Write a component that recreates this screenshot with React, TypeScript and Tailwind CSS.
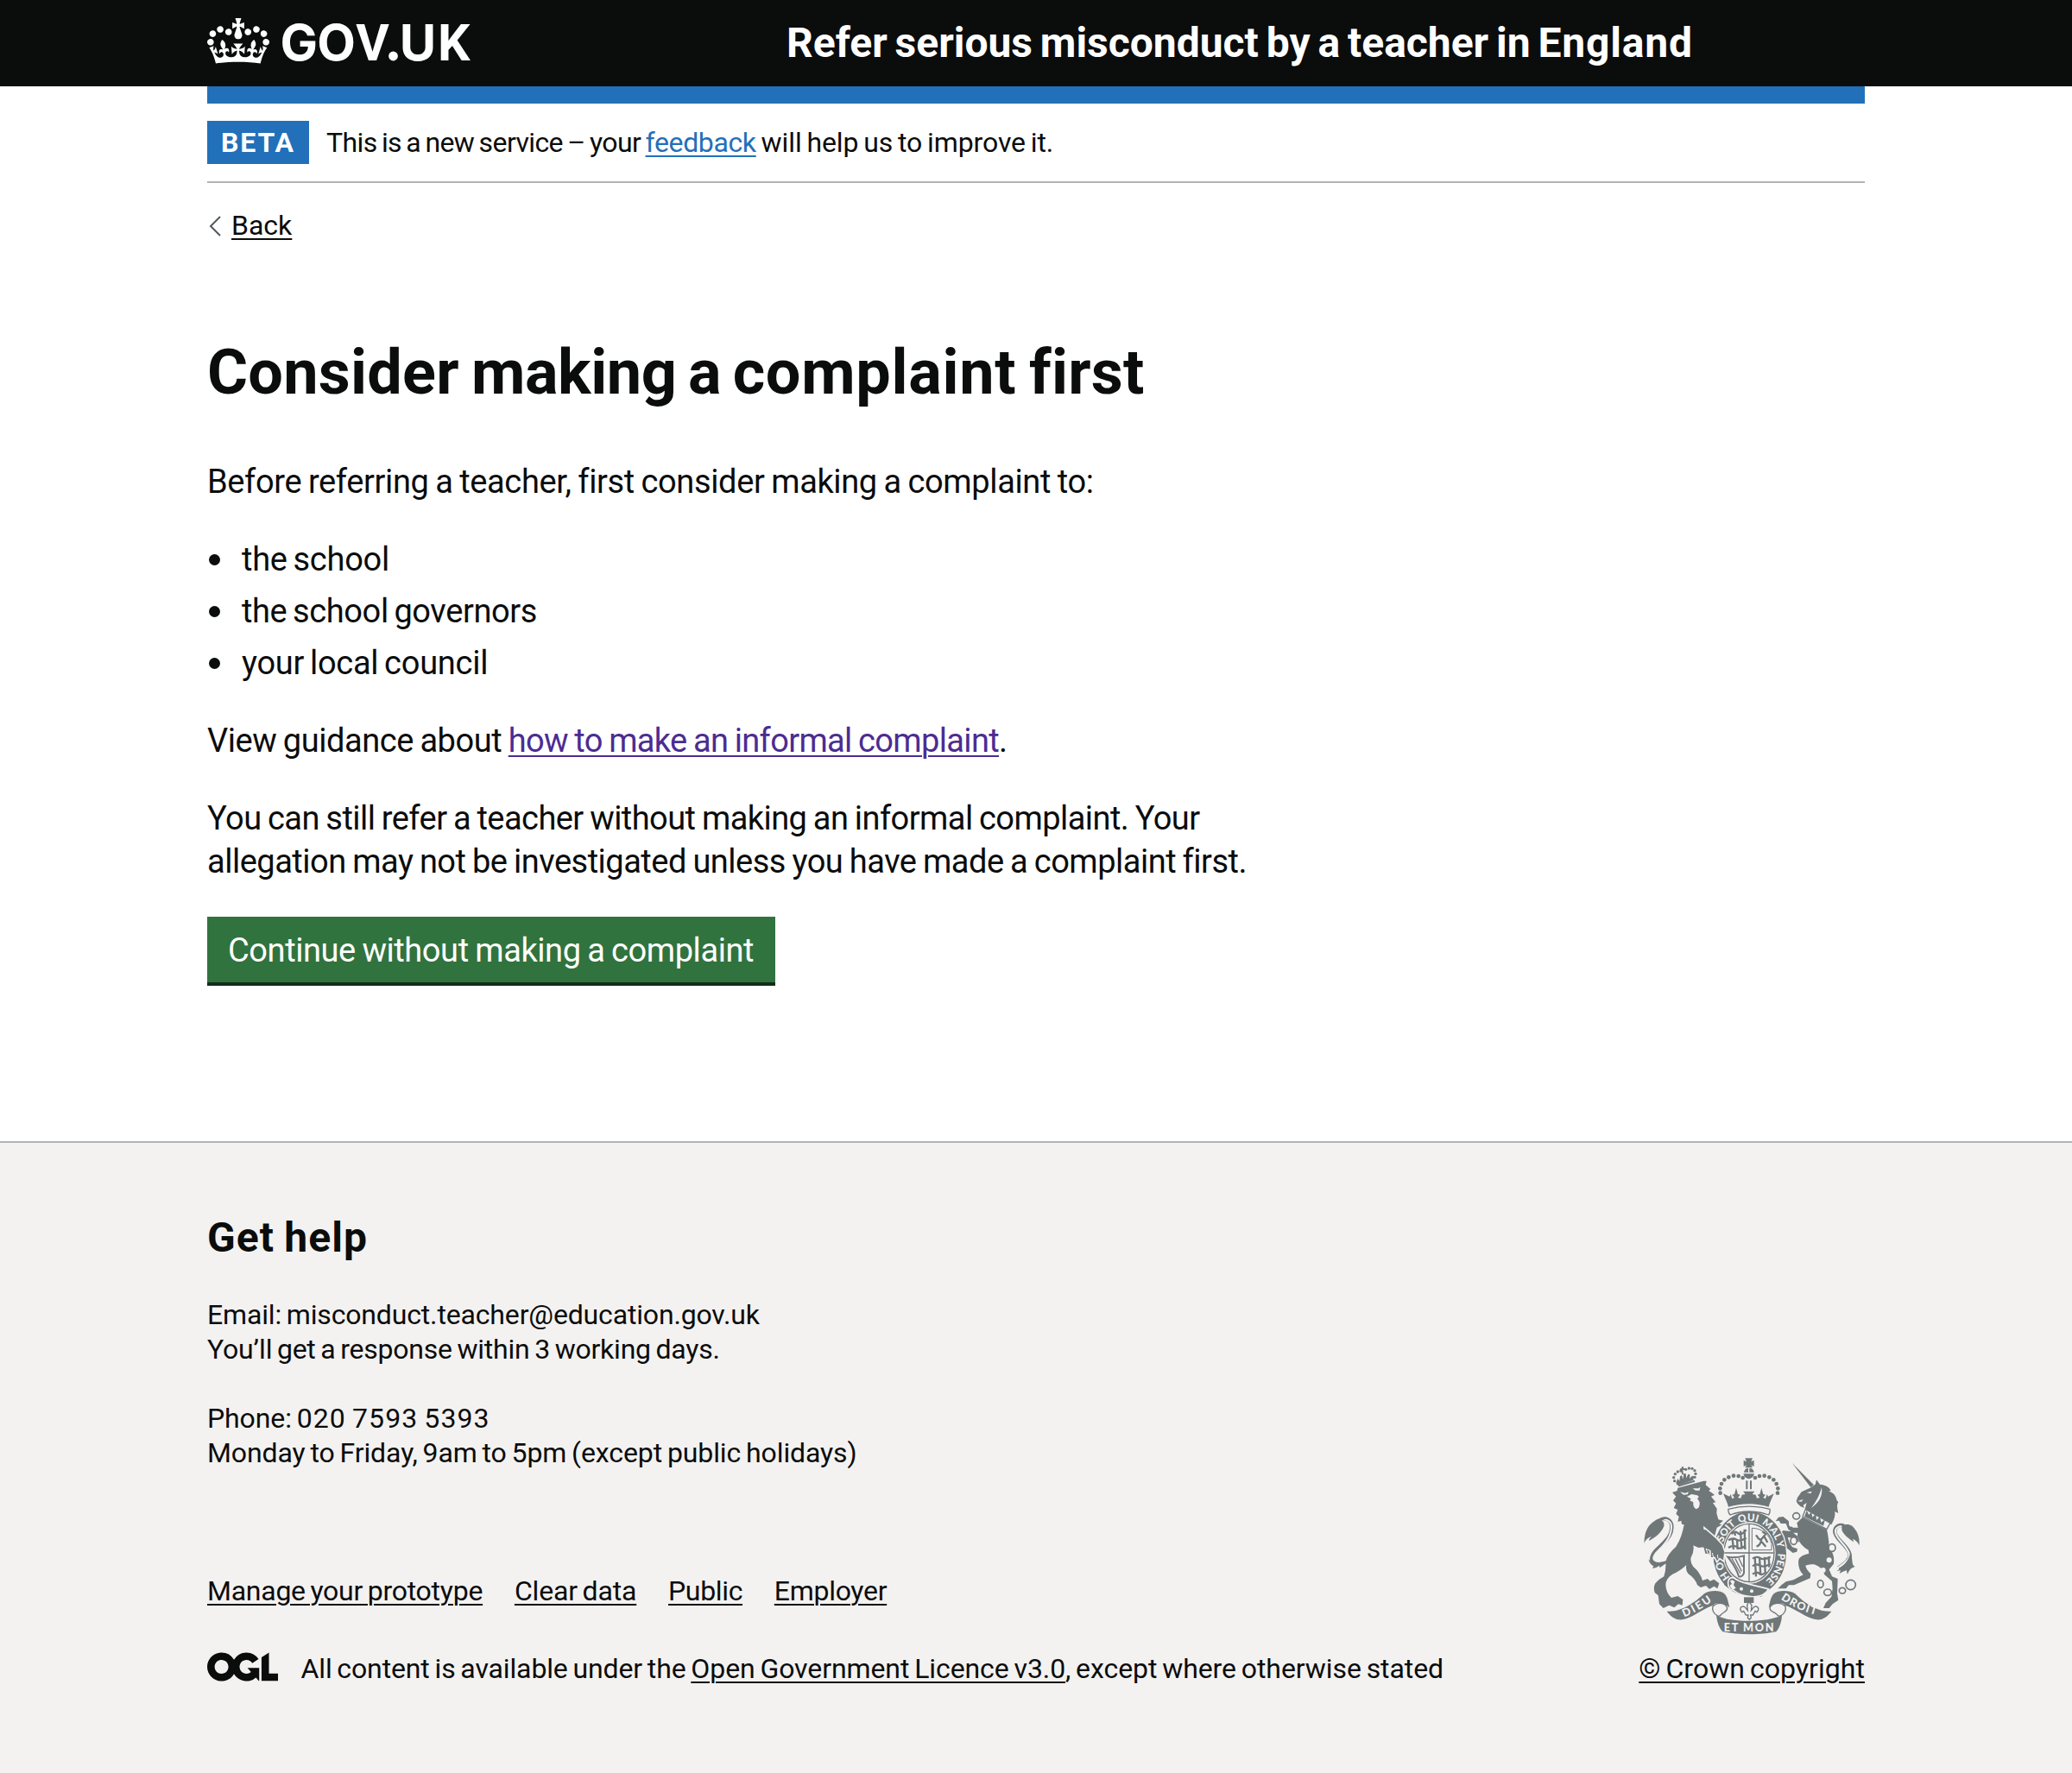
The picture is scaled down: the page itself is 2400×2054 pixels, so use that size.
import type { ReactNode } from "react";

const CROWN =
  "M25 30.2c3.5 1.5 7.7-.2 9.1-3.7 1.5-3.6-.2-7.8-3.9-9.2-3.6-1.4-7.6.3-9.1 3.9-1.4 3.5.3 7.5 3.9 9zM9 39.5c3.6 1.5 7.8-.2 9.2-3.7 1.5-3.6-.2-7.8-3.9-9.1-3.6-1.5-7.6.2-9.1 3.8-1.4 3.5.3 7.5 3.8 9zM4.4 57.2c3.5 1.5 7.7-.2 9.1-3.8 1.5-3.6-.2-7.7-3.9-9.1-3.5-1.5-7.6.3-9.1 3.8-1.4 3.5.3 7.6 3.9 9.1zm38.3-21.4c3.5 1.5 7.7-.2 9.1-3.8 1.5-3.6-.2-7.7-3.9-9.1-3.6-1.5-7.6.3-9.1 3.8-1.3 3.6.4 7.7 3.9 9.1zm64.4-5.6c-3.6 1.5-7.8-.2-9.1-3.7-1.5-3.6.2-7.8 3.8-9.2 3.6-1.4 7.7.3 9.2 3.9 1.3 3.5-.4 7.5-3.9 9zm15.9 9.3c-3.6 1.5-7.7-.2-9.1-3.7-1.5-3.6.2-7.8 3.7-9.1 3.6-1.5 7.7.2 9.2 3.8 1.5 3.5-.3 7.5-3.8 9zm4.7 17.7c-3.6 1.5-7.8-.2-9.2-3.8-1.5-3.6.2-7.7 3.9-9.1 3.6-1.5 7.7.3 9.2 3.8 1.3 3.5-.4 7.6-3.9 9.1zM89.3 35.8c-3.6 1.5-7.8-.2-9.2-3.8-1.4-3.6.2-7.7 3.9-9.1 3.6-1.5 7.7.3 9.2 3.8 1.4 3.6-.3 7.7-3.9 9.1zM69.7 17.7l8.9 4.7V9.3l-8.9 2.8c-.2-.3-.5-.6-.9-.9L72.4 0H59.6l3.5 11.2c-.3.3-.6.5-.9.9l-8.8-2.8v13.1l8.8-4.7c.3.3.6.7.9.9l-5 15.4v.1c-.2.8-.4 1.6-.4 2.4 0 4.1 3.1 7.5 7 8.1h.2c.3 0 .7.1 1 .1.4 0 .7 0 1-.1h.2c4-.6 7.1-4.1 7.1-8.1 0-.8-.1-1.7-.4-2.4V34l-5.1-15.4c.4-.2.7-.6 1-.9zM66 92.8c16.9 0 32.8 1.1 47.1 3.2 4-16.9 8.9-26.7 14-33.5l-9.6-3.4c1 4.9 1.1 7.2 0 10.2-1.5-1.4-3-4.3-4.2-8.7L108.6 76c2.8-2 5-3.2 7.5-3.3-4.4 9.4-10 11.9-13.6 11.2-4.3-.8-6.3-4.6-5.6-7.9 1-4.7 5.7-5.9 8-.5 4.3-8.7-3-11.4-7.6-8.8 7.1-7.2 7.9-13.5 2.1-21.1-8 6.1-8.1 12.3-4.5 20.8-4.7-5.4-12.1-2.5-9.5 6.2 3.4-5.2 7.9-2 7.2 3.1-.6 4.3-6.4 7.8-13.5 7.2-10.3-.9-10.9-8-11.2-13.8 2.5-.5 7.1 1.8 11 7.3L80.2 60c-4.1 4.4-8 5.3-12.3 5.4 1.4-4.4 8-11.6 8-11.6H55.5s6.4 7.2 7.9 11.6c-4.2-.1-8-1-12.3-5.4l1.4 16.4c3.9-5.5 8.5-7.7 10.9-7.3-.3 5.8-.9 12.8-11.1 13.8-7.2.6-12.9-2.9-13.5-7.2-.7-5 3.8-8.3 7.1-3.1 2.7-8.7-4.6-11.6-9.4-6.2 3.7-8.5 3.6-14.7-4.6-20.8-5.8 7.6-5 13.9 2.2 21.1-4.7-2.6-11.9.1-7.7 8.8 2.3-5.5 7.1-4.2 8.1.5.7 3.3-1.3 7.1-5.7 7.9-3.5.7-9-1.8-13.5-11.2 2.5.1 4.7 1.3 7.5 3.3l-4.7-15.4c-1.2 4.4-2.7 7.2-4.3 8.7-1.1-3-.9-5.3 0-10.2l-9.5 3.4c5 6.9 9.9 16.7 14 33.5 14.8-2.1 30.8-3.2 47.7-3.2z";

const OGL =
  "M421.5 142.8V.1l-50.7 32.3v161.1h112.4v-50.7zm-122.3-9.6A47.12 47.12 0 0 1 221 97.8c0-26 21.1-47.1 47.1-47.1 16.7 0 31.4 8.7 39.7 21.8l42.7-27.2A97.63 97.63 0 0 0 268.1 0c-36.5 0-68.3 20.1-85.1 49.7A98 98 0 0 0 97.8 0C43.9 0 0 43.9 0 97.8s43.9 97.8 97.8 97.8c36.5 0 68.3-20.1 85.1-49.7a97.76 97.76 0 0 0 149.6 25.4l19.4 22.2h3v-87.8h-80l24.3 27.5zM97.8 145c-26 0-47.1-21.1-47.1-47.1s21.1-47.1 47.1-47.1 47.1 21.1 47.1 47.1S123.8 145 97.8 145";

function GovUkLogo() {
  return (
    <svg width="310" height="60" viewBox="0 0 310 60" fill="#fff" className="overflow-visible" role="img" aria-label="GOV.UK">
      <svg x="0" y="1" width="72" height="53" viewBox="0 0 132 97">
        <path fillRule="evenodd" d={CROWN} />
      </svg>
      <text y="50" className="text-[58px] font-bold" fontFamily="Inter, sans-serif">
        <tspan x="84.5">G</tspan>
        <tspan x="127.3">O</tspan>
        <tspan x="172.2" className="text-[59px]" fontFamily="Roboto, sans-serif">V</tspan>
      </text>
      <circle cx="215.5" cy="45" r="5.4" />
      <text y="50" className="text-[58px] font-bold" fontFamily="Inter, sans-serif">
        <tspan x="222.8">U</tspan>
        <tspan x="267" className="text-[59px]" fontFamily="Roboto, sans-serif">K</tspan>
      </text>
    </svg>
  );
}

const ARCH = [
  [338, 180], [337, 164], [342, 148], [352, 134], [367, 125], [384, 120], [401, 121], [416, 127],
];

const LION_PEARLS = [
  [179, 138], [176, 126], [181, 114], [190, 106], [201, 103], [218, 98], [229, 94], [240, 95], [249, 102], [252, 113], [249, 125],
];

const GARTER_WORDS = [
  { word: "HONI", at: 18, len: 114 },
  { word: "SOIT", at: 146, len: 78 },
  { word: "QUI", at: 236, len: 66 },
  { word: "MAL", at: 316, len: 78 },
  { word: "Y", at: 398, len: 22 },
  { word: "PENSE", at: 439, len: 108 },
];

function RoyalArms() {
  const g = "#6f7779";
  const l = "#f3f2f1";
  return (
    <svg width="250" height="205" viewBox="72 58 750 615" fill={g} className="overflow-visible" aria-hidden="true">
      {/* lion's crown */}
      {LION_PEARLS.map(([x, y]) => (
        <circle key={x + "-" + y} cx={x} cy={y} r="5" />
      ))}
      <path d="M198 95l6-1-1-6 8 1-2 5 7 0-1 6-7 0 2 16-6 0-1-15-6 1z" />
      <path d="M184 144l6-14 6 8 2-16 6-4 4 14 3-20 7 0 2 16 6-14 6 2 0 14 6-8 8-2-2 15-56 18z" />
      <path d="M190 151l58-16 2 6-56 17z" />
      {/* lion's tail */}
      <path d="M176 386C160 418 132 430 112 424C90 416 100 392 122 372C148 348 172 326 169 294C167 272 148 264 130 274" fill="none" stroke={g} strokeWidth="13" />
      <path d="M176 386C160 414 132 422 114 416C98 410 108 392 124 378C150 354 170 328 168 294C166 276 148 268 132 276" fill="none" stroke={l} strokeWidth="6" />
      <path d="M150 268C128 262 112 274 98 286C84 298 74 320 73 354C82 338 90 334 98 332C92 338 90 342 90 346C112 334 134 318 142 296C144 284 140 278 134 276z" />
      <path d="M88 410C98 420 112 424 132 420L158 414C148 428 136 432 128 440L126 432C118 438 112 440 102 442L106 434C96 430 92 422 88 410z" />
      {/* lion */}
      <path d="M171 178L188 172L190 162L280 138L290 138L287 152L304 166L298 172L318 186L306 192L322 212L312 214L326 234L325 250L331 272L348 276L334 288L344 290L326 300L318 330L334 348L350 378L347 416L334 408L322 418L316 402L304 404L300 392L286 390L280 368L262 370L244 362Q248 382 236 404Q232 420 244 436Q268 456 276 484L294 478L302 486L316 480L334 494L328 512L316 504L300 514L288 502L270 508L258 500Q252 478 226 460Q216 446 220 430Q200 450 172 462Q148 476 148 500Q150 528 168 544L190 538L208 550L206 570L192 566L178 578L160 570L140 580L126 566L122 536L110 526Q104 508 112 494Q126 478 142 470Q150 446 148 420Q152 394 184 366Q204 336 212 290L204 288L202 276L190 280L194 262L184 252L190 238L176 232L184 216L174 206L184 192z" />
      <path d="M198 176l18 4 12-4-4 9-14 1zM242 164l20 0 6-5-2 12-14 0zM222 192l16-8 20 4 6 6-6 4 8 14q2 20-12 24-12-6-10-24l-12-6 4-6z" fill={l} />
      {/* unicorn */}
      <path d="M587 75L663 152L652 160z" />
      <path d="M650 162L668 150L672 134L684 150C704 152 716 158 722 172L714 174C732 178 740 190 742 204L748 212C744 218 742 224 748 250L736 244C738 258 734 272 724 290L632 236L638 214L626 222L630 232L616 226L606 216L602 208L606 196L620 176z" />
      <path d="M638 178l18-4-4 8zM606 208l20-6-6 8zM690 160c4 28-6 50-36 72 18-24 30-46 36-72z" fill={l} />
      <path d="M634 236L720 284L708 306L624 262z" fill={l} stroke={g} strokeWidth="4" />
      <path d="M630 262l8-22 8 16 8-12 4 20 12-12 2 22 12-12 4 20 14-10-6 22z" />
      <path d="M624 264L708 308Q716 340 716 372Q736 390 732 426L716 446L726 470L746 478L744 530L748 552L728 566L716 580L696 580L704 562L724 540L728 512L726 486L700 464Q694 438 664 428Q644 426 634 432Q636 446 652 460L650 476L594 500L576 500L566 512L538 512L552 498L566 488L592 482L626 464Q606 444 610 412Q616 396 646 390L644 378Q612 360 606 330L608 300L604 284z" />
      <path d="M606 330L586 314L556 310L546 320L548 336L560 352L556 366L572 374L590 388L604 384L606 374L588 368L578 352L572 334L590 336L612 352zM612 300L590 300L574 276L556 262L540 264L530 278L542 276L548 286L566 286L574 306L590 318L612 318z" />
      {/* unicorn's tail */}
      <path d="M748 440C764 430 790 414 788 394C782 362 740 344 736 316C734 296 752 288 768 294" fill="none" stroke={g} strokeWidth="13" />
      <path d="M746 440C762 430 788 414 786 394C780 362 742 344 738 316C736 300 752 292 768 298" fill="none" stroke={l} strokeWidth="6" />
      <path d="M760 292C784 284 798 292 806 306C818 320 822 342 821 362C814 348 806 342 798 340L802 350C782 338 764 322 760 308z" />
      <path d="M790 384C800 410 792 430 806 436C796 440 788 442 780 462L776 448C768 452 760 454 752 460L756 448L742 452C764 434 786 416 790 384z" />
      {/* chain */}
      <g fill={l} stroke={g} strokeWidth="5">
        <ellipse cx="602" cy="260" rx="12" ry="11" />
        <ellipse cx="584" cy="286" rx="8" ry="11" stroke="none" />
        <ellipse cx="593" cy="346" rx="11" ry="13" />
        <ellipse cx="726" cy="370" rx="12" ry="13" />
        <circle cx="716" cy="413" r="9" stroke="none" />
        <circle cx="695" cy="448" r="9" stroke="none" />
        <ellipse cx="686" cy="496" rx="10" ry="13" />
        <ellipse cx="711" cy="525" rx="13" ry="11" />
        <ellipse cx="762" cy="519" rx="11" ry="10" />
        <circle cx="791" cy="499" r="17" />
      </g>
      {/* garter */}
      <ellipse cx="440" cy="391" rx="131" ry="151" fill={l} />
      <ellipse cx="440" cy="391" rx="127" ry="147" />
      <ellipse cx="438" cy="388" rx="92" ry="107" fill={l} />
      <path d="M352 478C390 510 450 520 510 512L480 540L400 530L352 500z" />
      <ellipse cx="438" cy="388" rx="87" ry="101" fill="none" stroke={g} strokeWidth="4" />
      <path id="garter" d="M385 485A98 114 0 1 1 495 485" fill="none" />
      {GARTER_WORDS.map(({ word, at, len }) => (
        <text key={word} fill={l} className="text-[35px] font-black" fontFamily="Lato, sans-serif">
          <textPath href="#garter" startOffset={at} textLength={len} lengthAdjust="spacing">
            {word}
          </textPath>
        </text>
      ))}
      {/* lion's foreleg over the garter */}
      <path d="M282 300L322 334L346 360L354 384L350 418L336 408L326 420L318 404L304 406L302 380L288 350z" stroke={l} strokeWidth="5" />
      <path d="M250 300L286 308L300 350L304 380L280 368L262 366z" />
      <path d="M296 392l-8-18 14 6M314 404l-4-16M330 408l-2-14" fill="none" stroke={l} strokeWidth="3" />
      {/* quartered shield */}
      <path d="M436 288h4v200h-4zM352 386h172v4h-172z" />
      <g fill="none" stroke={g} strokeWidth="7">
        <path d="M376 322q14-12 24-2t28-12M366 344q16-10 28-2t34-6M366 370q18-12 30-2t30-6M386 312l4 16M408 312l4 60M380 340l4 36M396 340l2 36M422 306l2 70" />
        <path d="M450 408q14-10 26-2t36-4M450 434q14-10 26-2t36-6M450 462q14-10 24-2t24-6M458 404l4 66M474 404l4 62M492 402l2 56M506 402l2 36" />
        <path d="M464 366q14-6 16-22l-12-8M478 344l18-22-12-8M490 330l12 22M482 350l14 16M462 326l10 14" />
      </g>
      <path d="M448 302v76h68v-22c-6-28-30-54-68-54z" fill="none" stroke={g} strokeWidth="3" />
      <path d="M364 402c20 4 36 2 56-4v60c-4 10-10 14-18 12-10-34-22-46-38-68z" fill="none" stroke={g} strokeWidth="6" />
      <path d="M378 408l30 52M390 408l22 44M402 406l14 30" stroke={g} strokeWidth="4" />
      {/* buckle and strap */}
      <path d="M366 484C372 470 386 472 392 480C420 498 464 500 506 514C494 534 470 542 444 540C416 538 396 528 384 518C370 518 362 500 366 484z" stroke={l} strokeWidth="5" />
      <path d="M372 486q8-8 16 2l-4 12 8 10-10 6q-12-8-10-16l6-4z" fill={l} />
      <circle cx="411" cy="513" r="6" fill={l} />
      <circle cx="447" cy="521" r="6" fill={l} />
      {/* central crown */}
      <path d="M424 59h26l-5 12 10-5v22l-10-5 5 9h-26l5-9-10 5v-22l10 5zM420 108q2-12 12-14h11q10 2 12 14zM418 113h38q-4 16-19 18-15-2-19-18zM427 137h6v30h-6zM441 137h6v30h-6z" />
      <path d="M435 94h4v14h-4z" fill={l} />
      {ARCH.map(([x, y]) => (
        <g key={x}>
          <circle cx={x} cy={y} r="7" />
          <circle cx={875 - x} cy={y} r="7" />
        </g>
      ))}
      <path d="M348 182l22 10 4-8 5 16 8-4-8-10 8-2 6-22 6 22 8 2-8 10 10 2 4-12 12-2-8-10h40l-8 10 12 2 4 12 10-2-8-10 8-2 6-22 6 22 8 2-8 10 8 4 5-16 4 8 20-10c-6 16-14 28-18 46-46-14-94-14-140 0-4-18-12-30-18-46z" />
      <path d="M366 236c46-12 98-12 144 0q2 10-4 20c-42-16-94-16-134 0q-8-10-6-20z" fill={l} stroke={g} strokeWidth="4" />
      {/* motto ribbons */}
      <path d="M152 591C200 596 250 560 282 530C300 518 336 516 352 530C362 540 364 552 370 578C350 562 320 558 314 570C280 580 240 614 206 620C184 622 168 612 152 591z" />
      <path d="M724 591C676 596 628 560 598 530C580 518 540 516 524 530C514 540 512 552 506 578C526 562 556 558 562 570C596 580 636 614 672 620C692 622 708 612 724 591z" />
      <path d="M312 574C330 556 358 562 362 580C362 594 344 594 338 606L330 608C316 600 308 588 312 574z" fill={l} stroke={g} strokeWidth="4" />
      <path d="M564 574C546 556 514 562 510 580C510 594 532 594 538 606L546 608C560 600 568 588 564 574z" fill={l} stroke={g} strokeWidth="4" />
      <path d="M324 602C350 632 520 632 552 602C552 632 540 654 532 662C480 674 400 674 346 662C336 652 326 632 324 602z" />
      <path id="dieu" d="M212 611Q262 592 320 548" fill="none" />
      <path id="droit" d="M548 548Q606 590 682 606" fill="none" />
      <g fill={l} className="text-[38px] font-black" fontFamily="Lato, sans-serif">
        <text><textPath href="#dieu" textLength="112" startOffset="0">DIEU</textPath></text>
        <text><textPath href="#droit" textLength="134" startOffset="0">DROIT</textPath></text>
        <text x="350" y="660" textLength="174">ET MON</text>
      </g>
      {/* pendant */}
      <path d="M420 542h34v20h-34z" />
      <path d="M437 556l10 14-2 18 8-10q8-8 16 0 4 8-4 16l-6-4-8 14h-8l2 10-6 6-6-6 2-10h-8l-8-14-6 4q-8-8-4-16 8-8 16 0l8 10-2-18z" fill={l} stroke={g} strokeWidth="4" />
    </svg>
  );
}

const LINK = "underline decoration-2 underline-offset-[4px]";

function FooterLink({ children, className }: { children: ReactNode; className: string }) {
  return (
    <a href="#" className={`${LINK} ${className}`}>
      {children}
    </a>
  );
}

const PLACES = [
  { text: "the school", cls: "tracking-[-0.26px]" },
  { text: "the school governors", cls: "tracking-[-0.38px]" },
  { text: "your local council", cls: "tracking-[-0.26px]" },
];

export default function App() {
  return (
    <div className="flex min-h-[2054px] flex-col bg-white font-['Roboto',sans-serif] text-[#0b0c0c]">
      <header className="bg-[#0b0c0c] text-white">
        <div className="mx-[240px] flex h-[100px] items-center">
          <a href="#" className="block w-[671px] shrink-0">
            <GovUkLogo />
          </a>
          <a href="#" className="text-[48px] leading-[50px] font-bold tracking-[-0.02px] whitespace-nowrap [word-spacing:-3px]">
            Refer serious misconduct by a teacher in <span className="tracking-[0.8px]">England</span>
          </a>
        </div>
      </header>

      <div className="mx-[240px] h-5 bg-[#2270b9]" />

      <div className="mx-[240px] flex h-[92px] items-center gap-5 border-b-2 border-[#b1b4b6] text-[32px] leading-[50px] whitespace-nowrap">
        <strong className="h-[50px] bg-[#2270b9] pr-4 pl-4 font-bold tracking-[1.9px] text-white">BETA</strong>
        <p className="whitespace-pre [word-spacing:-2px]">
          <span className="tracking-[-0.61px]">This is a new service – your </span>
          <a href="#" className={`${LINK} tracking-[-0.36px] text-[#2270b9]`}>feedback</a>
          <span className="tracking-[-0.1px]"> will help us to improve it.</span>
        </p>
      </div>

      <main className="mx-[240px] h-[1110px]">
        <a href="#" className="mt-[29px] flex h-10 items-center text-[32px] leading-10">
          <svg width="28" height="24" viewBox="0 0 28 24" fill="none" stroke="#505a5f" strokeWidth="2" className="mt-0.5">
            <path d="M15 1L4 12l11 11" />
          </svg>
          <span className={LINK}>Back</span>
        </a>

        <h1 className="mt-[111px] text-[72px] leading-[80px] font-bold whitespace-nowrap [word-spacing:-4px]">
          <span className="tracking-[0.24px]">Consider </span>
          <span className="tracking-[-0.4px]">making a </span>
          <span className="tracking-[0.7px]">complaint </span>
          <span className="tracking-[0.24px]">first</span>
        </h1>

        <div className="mt-[61px] text-[38px] leading-[50px] whitespace-nowrap [word-spacing:-1.4px]">
          <p className="tracking-[-0.36px]">Before referring a teacher, first consider making a complaint to:</p>
          <ul className="mt-10 flex flex-col gap-2.5">
            {PLACES.map((p) => (
              <li key={p.text} className="flex items-center [word-spacing:-2.4px]">
                <span className="ml-[1.5px] h-[13px] w-[13px] rounded-full bg-[#0b0c0c]" />
                <span className={`ml-[25.5px] ${p.cls}`}>{p.text}</span>
              </li>
            ))}
          </ul>
          <p className="mt-10 whitespace-pre">
            <span className="tracking-[-0.46px]">View guidance about </span>
            <a href="#" className={`${LINK} tracking-[-0.65px] text-[#4c2c92]`}>how to make an informal complaint</a>.
          </p>
          <p className="mt-10">
            <span className="block tracking-[-0.56px]">You can still refer a teacher without making an informal complaint. Your</span>
            <span className="block tracking-[-0.5px]">allegation may not be investigated unless you have made a complaint first.</span>
          </p>
          <button className="mt-[39px] flex h-20 w-[658px] items-center border-b-4 border-[#122d1b] bg-[#31733e] pt-0.5 pl-6 tracking-[-0.42px] text-white [word-spacing:-1.4px]">
            Continue without making a complaint
          </button>
        </div>
      </main>

      <footer className="grow border-t-2 border-[#b1b4b6] bg-[#f3f2f1] px-[240px] text-[32px] leading-10 whitespace-nowrap [word-spacing:-2px]">
        <div className="flex items-end justify-between">
          <div>
            <h2 className="mt-[85px] text-[48px] leading-[50px] font-bold tracking-[1.09px]">Get help</h2>
            <p className="mt-11">
              <span className="block tracking-[-0.16px]">Email: misconduct.teacher@education.gov.uk</span>
              <span className="block tracking-[-0.23px]">You’ll get a response within 3 working days.</span>
            </p>
            <p className="mt-10">
              <span className="block tracking-[1.1px]">
                <span className="tracking-[-0.1px]">Phone: </span>020 7593 5393
              </span>
              <span className="block tracking-[-0.1px]">Monday to Friday, 9am to 5pm (except public holidays)</span>
            </p>
            <nav className="mt-[120px] flex gap-[36.8px]">
              <FooterLink className="tracking-[-0.26px]">Manage your prototype</FooterLink>
              <FooterLink className="tracking-[-0.18px]">Clear data</FooterLink>
              <FooterLink className="tracking-[-0.35px]">Public</FooterLink>
              <FooterLink className="tracking-[-0.3px]">Employer</FooterLink>
            </nav>
            <div className="mt-[50px] flex items-center">
              <svg width="82" height="34" viewBox="0 0 483.2 195.7" fill="#0b0c0c" className="mt-[-4px]">
                <path d={OGL} />
              </svg>
              <p className="ml-[26.5px] whitespace-pre">
                <span className="tracking-[-0.13px]">All content is available under the </span>
                <FooterLink className="tracking-[-0.09px]">Open Government Licence v3.0</FooterLink>
                <span className="tracking-[-0.08px]">, except where otherwise stated</span>
              </p>
            </div>
          </div>
          <div className="flex flex-col items-end">
            <div className="mr-[6px]">
              <RoyalArms />
            </div>
            <a href="#" className={`${LINK} mt-[19px] tracking-[0.04px]`}>© Crown copyright</a>
          </div>
        </div>
      </footer>
    </div>
  );
}
